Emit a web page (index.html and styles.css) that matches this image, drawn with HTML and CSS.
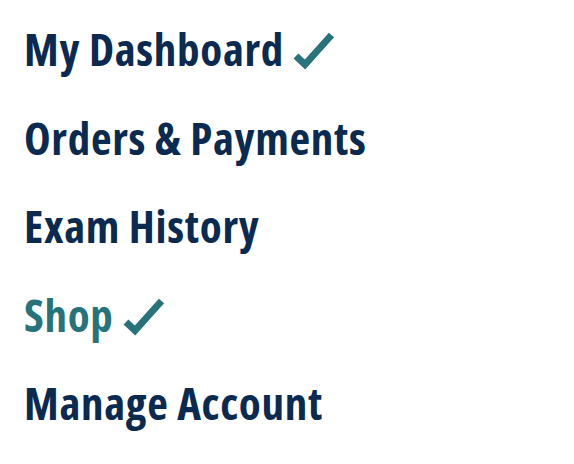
FILE: index.html
```html
<!DOCTYPE html>
<html>
<head>
<meta charset="utf-8">
<link rel="stylesheet" href="styles.css">
</head>
<body>
<ul class="menu">
  <li class="item"><span class="label">My Dashboard</span><svg class="check" viewBox="0 0 42 39" width="42" height="39"><polyline points="3,25 12,33.5 38.5,4" /></svg></li>
  <li class="item"><span class="label">Orders &amp; Payments</span></li>
  <li class="item"><span class="label">Exam History</span></li>
  <li class="item active"><span class="label">Shop</span><svg class="check" viewBox="0 0 42 39" width="42" height="39"><polyline points="3,25 12,33.5 38.5,4" /></svg></li>
  <li class="item"><span class="label">Manage Account</span></li>
</ul>
</body>
</html>
```
FILE: styles.css
```css
html, body { margin: 0; padding: 0; background: #fff; }
.menu {
  list-style: none;
  margin: 0;
  padding: 5px 0 0 24px;
  font-family: "Open Sans", sans-serif;
  font-stretch: condensed;
  font-weight: 700;
  font-size: 45px;
  letter-spacing: 0.7px;
  color: #0b2a4f;
}
.item { line-height: 88.5px; height: 88.5px; white-space: nowrap; }
.active { color: #27737b; }
.check {
  margin-left: 9px;
  vertical-align: -4px;
  fill: none;
  stroke: #27737b;
  stroke-width: 7;
  stroke-linecap: butt;
  stroke-linejoin: miter;
}
```
